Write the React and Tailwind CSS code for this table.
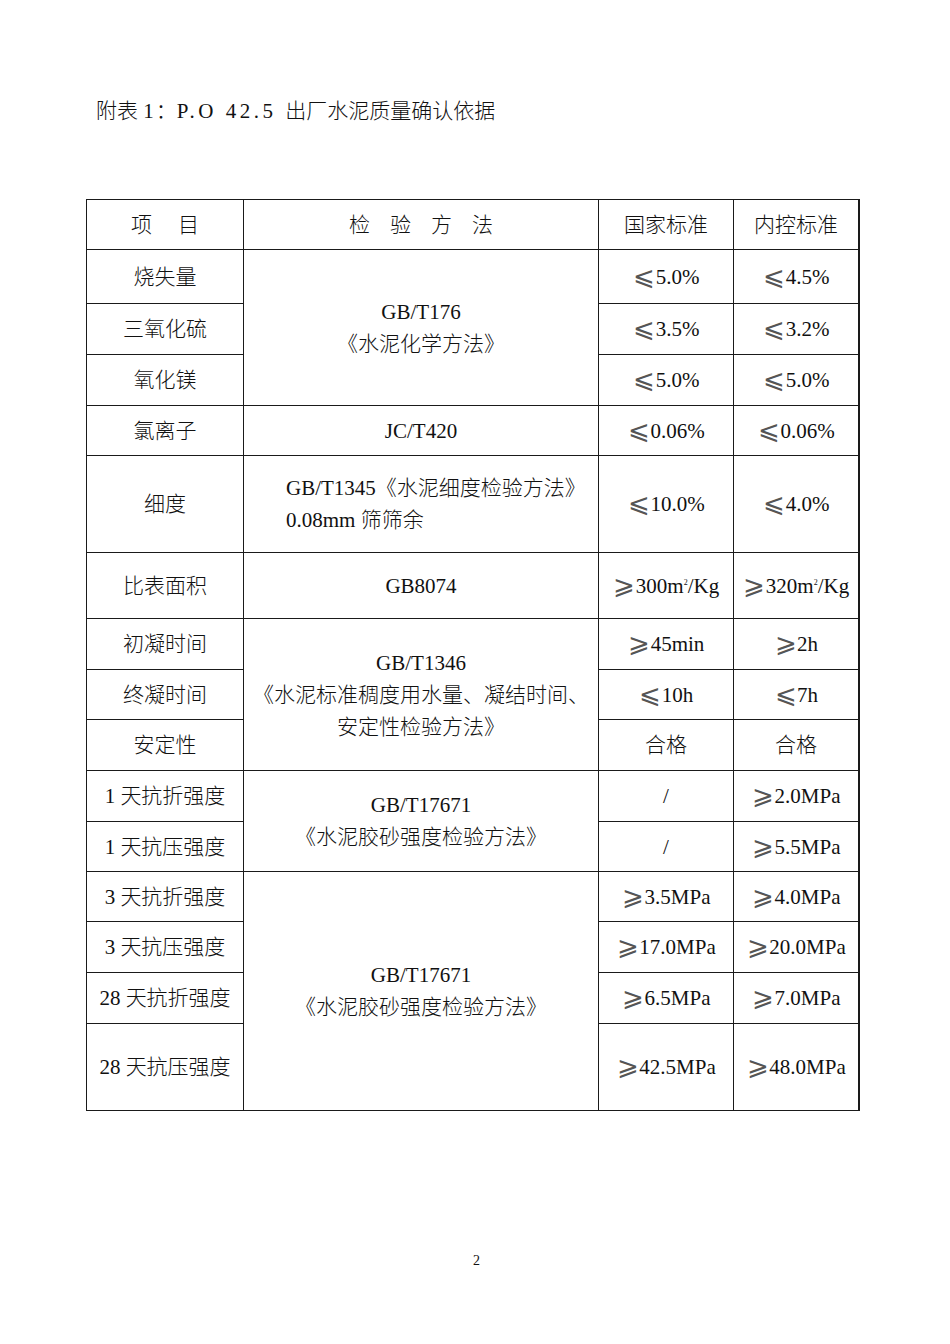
const font = { fontFamily: '"Liberation Serif", "Noto Sans CJK SC", "DejaVu Serif", serif' };

function Cell({ children, rowSpan, className = "" }) {
    return (
        <td
            rowSpan={rowSpan}
            className={"border border-[#1a1a1a] text-center align-middle leading-[32px] p-0 " + className}
        >
            {children}
        </td>
    );
}

// full-width slanted ≤ / ≥ as in the source document
function Le({ ge }) {
    return (
        <span
            className="inline-block w-[23px] text-[26px] leading-none font-extralight align-[-1px] text-[#555]"
            style={{ fontFamily: '"DejaVu Sans", sans-serif' }}
        >
            {ge ? "⩾" : "⩽"}
        </span>
    );
}

function M2() {
    return (
        <>
            m<sup className="text-[8px] align-[4px]">2</sup>
        </>
    );
}

export default function App() {
    return (
        <div className="w-[950px] h-[1344px] bg-white text-[#111] font-light flex flex-col" style={font}>
            <div className="pt-[96px] pl-[96px] text-[21px] leading-[30px] whitespace-pre">
                附表 <span className="tracking-[2px]">1</span>：<span className="tracking-[3.5px]">P.O 42.5 </span>出厂水泥质量确认依据
            </div>

            <div className="mt-[73px] ml-[86px] w-[774px] pr-px border-r border-[#1a1a1a]">
                <table className="w-[772px] table-fixed border-collapse text-[21px]">
                    <colgroup>
                        <col className="w-[157px]" />
                        <col className="w-[355px]" />
                        <col className="w-[135px]" />
                        <col className="w-[125px]" />
                    </colgroup>
                    <tbody>
                        <tr className="h-[50px]">
                            <Cell>
                                <span className="inline-flex gap-[26px]">
                                    <span>项</span>
                                    <span>目</span>
                                </span>
                            </Cell>
                            <Cell>
                                <span className="inline-flex gap-[20px]">
                                    <span>检</span>
                                    <span>验</span>
                                    <span>方</span>
                                    <span>法</span>
                                </span>
                            </Cell>
                            <Cell>国家标准</Cell>
                            <Cell>内控标准</Cell>
                        </tr>
                        <tr className="h-[54px]">
                            <Cell>烧失量</Cell>
                            <Cell rowSpan={3}>
                                GB/T176
                                <br />
                                《水泥化学方法》
                            </Cell>
                            <Cell><Le />5.0%</Cell>
                            <Cell><Le />4.5%</Cell>
                        </tr>
                        <tr className="h-[51px]">
                            <Cell>三氧化硫</Cell>
                            <Cell><Le />3.5%</Cell>
                            <Cell><Le />3.2%</Cell>
                        </tr>
                        <tr className="h-[51px]">
                            <Cell>氧化镁</Cell>
                            <Cell><Le />5.0%</Cell>
                            <Cell><Le />5.0%</Cell>
                        </tr>
                        <tr className="h-[50px]">
                            <Cell>氯离子</Cell>
                            <Cell>JC/T420</Cell>
                            <Cell><Le />0.06%</Cell>
                            <Cell><Le />0.06%</Cell>
                        </tr>
                        <tr className="h-[97px]">
                            <Cell>细度</Cell>
                            <Cell className="!text-left pl-[42px] whitespace-nowrap">
                                GB/T1345《水泥细度检验方法》
                                <br />
                                0.08mm 筛筛余
                            </Cell>
                            <Cell><Le />10.0%</Cell>
                            <Cell><Le />4.0%</Cell>
                        </tr>
                        <tr className="h-[66px]">
                            <Cell className="whitespace-nowrap">比表面积</Cell>
                            <Cell>GB8074</Cell>
                            <Cell className="whitespace-nowrap">
                                <Le ge />300<M2 />/Kg
                            </Cell>
                            <Cell className="whitespace-nowrap">
                                <Le ge />320<M2 />/Kg
                            </Cell>
                        </tr>
                        <tr className="h-[51px]">
                            <Cell>初凝时间</Cell>
                            <Cell rowSpan={3} className="whitespace-nowrap">
                                GB/T1346
                                <br />
                                《水泥标准稠度用水量、凝结时间、
                                <br />
                                安定性检验方法》
                            </Cell>
                            <Cell><Le ge />45min</Cell>
                            <Cell><Le ge />2h</Cell>
                        </tr>
                        <tr className="h-[50px]">
                            <Cell>终凝时间</Cell>
                            <Cell><Le />10h</Cell>
                            <Cell><Le />7h</Cell>
                        </tr>
                        <tr className="h-[51px]">
                            <Cell>安定性</Cell>
                            <Cell>合格</Cell>
                            <Cell>合格</Cell>
                        </tr>
                        <tr className="h-[51px]">
                            <Cell>1 天抗折强度</Cell>
                            <Cell rowSpan={2}>
                                GB/T17671
                                <br />
                                《水泥胶砂强度检验方法》
                            </Cell>
                            <Cell>/</Cell>
                            <Cell><Le ge />2.0MPa</Cell>
                        </tr>
                        <tr className="h-[50px]">
                            <Cell>1 天抗压强度</Cell>
                            <Cell>/</Cell>
                            <Cell><Le ge />5.5MPa</Cell>
                        </tr>
                        <tr className="h-[50px]">
                            <Cell>3 天抗折强度</Cell>
                            <Cell rowSpan={4}>
                                GB/T17671
                                <br />
                                《水泥胶砂强度检验方法》
                            </Cell>
                            <Cell><Le ge />3.5MPa</Cell>
                            <Cell><Le ge />4.0MPa</Cell>
                        </tr>
                        <tr className="h-[51px]">
                            <Cell>3 天抗压强度</Cell>
                            <Cell className="whitespace-nowrap"><Le ge />17.0MPa</Cell>
                            <Cell className="whitespace-nowrap"><Le ge />20.0MPa</Cell>
                        </tr>
                        <tr className="h-[51px]">
                            <Cell>28 天抗折强度</Cell>
                            <Cell><Le ge />6.5MPa</Cell>
                            <Cell><Le ge />7.0MPa</Cell>
                        </tr>
                        <tr className="h-[87px]">
                            <Cell className="whitespace-nowrap">28 天抗压强度</Cell>
                            <Cell className="whitespace-nowrap"><Le ge />42.5MPa</Cell>
                            <Cell className="whitespace-nowrap"><Le ge />48.0MPa</Cell>
                        </tr>
                    </tbody>
                </table>
            </div>

            <div className="mt-[140px] pl-[473px] text-[14px] leading-[20px]">2</div>
        </div>
    );
}
